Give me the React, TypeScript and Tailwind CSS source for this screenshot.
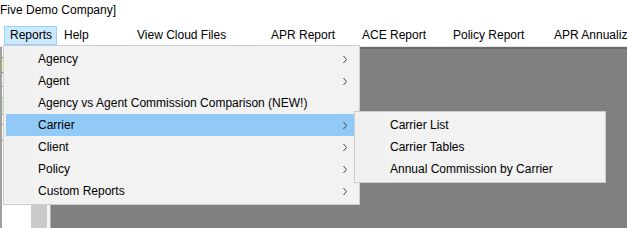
import React from "react";

const font = { fontFamily: '"Liberation Sans", Arial, sans-serif' };

function Chevron() {
  return (
    <svg width="6" height="9" viewBox="0 0 6 9" className="shrink-0">
      <path d="M1.5 1 L4.5 4.5 L1.5 8" fill="none" stroke="#404040" strokeWidth="1" />
    </svg>
  );
}

interface ItemProps {
  label: string;
  sub?: boolean;
  active?: boolean;
  gutter: string;
}

function MenuItem({ label, sub, active, gutter }: ItemProps) {
  return (
    <div className={`flex h-[22px] items-center ${active ? "bg-[#91c9f7]" : ""}`}>
      <div className={`h-full ${gutter} ${active ? "" : "bg-[#f0f0f0]"}`} />
      <span className="flex-1 pl-[5px] whitespace-nowrap">{label}</span>
      {sub && (
        <div className="w-[16px] mr-[9px] flex justify-end">
          <Chevron />
        </div>
      )}
    </div>
  );
}

const reportItems = [
  { label: "Agency", sub: true },
  { label: "Agent", sub: true },
  { label: "Agency vs Agent Commission Comparison (NEW!)" },
  { label: "Carrier", sub: true, active: true },
  { label: "Client", sub: true },
  { label: "Policy", sub: true },
  { label: "Custom Reports", sub: true },
];

const carrierItems = ["Carrier List", "Carrier Tables", "Annual Commission by Carrier"];

export default function App() {
  return (
    <div className="relative w-[627px] h-[228px] overflow-hidden bg-white text-[12px] text-black" style={font}>
      <div className="h-[24px] leading-[20px] whitespace-nowrap">Five Demo Company]</div>

      {/* menu bar */}
      <div className="flex h-[22px] items-start whitespace-nowrap overflow-hidden">
        <div className="shrink-0 ml-[4px] mt-[2px] h-[19px] w-[53px] pl-[5px] leading-[17px] bg-[#cce8ff] border border-[#99d1ff]">
          Reports
        </div>
        <div className="shrink-0 ml-[7px] w-[73px] mt-[2px] leading-[19px]">Help</div>
        <div className="shrink-0 w-[134px] mt-[2px] leading-[19px]">View Cloud Files</div>
        <div className="shrink-0 w-[91px] mt-[2px] leading-[19px]">APR Report</div>
        <div className="shrink-0 w-[91px] mt-[2px] leading-[19px]">ACE Report</div>
        <div className="shrink-0 w-[101px] mt-[2px] leading-[19px]">Policy Report</div>
        <div className="shrink-0 mt-[2px] leading-[19px]">APR Annualized Report</div>
      </div>

      {/* workspace */}
      <div className="flex h-[182px] border-t border-[#e5e5e5]">
        <div className="w-[31px] flex flex-col border-l-2 border-[#a0a0a0]">
          <div className="h-[10px]" />
          <div className="h-[16px] bg-[#ffff99] border-y border-[#707070]" />
          <div className="h-[14px] border-b border-[#a0a0a0]" />
          <div className="h-[10px]" />
          <div className="h-[18px] bg-[#c6f5c6] border-y border-[#a0a0a0]" />
          <div className="h-[10px] border-b border-[#a0a0a0]" />
          <div className="h-[16px] border-b border-[#a0a0a0]" />
          <div className="flex-1" />
        </div>
        <div className="w-[16px] bg-[#cacaca]" />
        <div className="w-[4px] bg-[#f4f4f4] border-r border-[#b0b0b0]" />
        <div className="flex-1 bg-[#808080] border-t-2 border-[#6b6b6b]" />
      </div>

      {/* Reports dropdown */}
      <div className="absolute left-[3px] top-[45px] w-[357px] h-[160px] p-[2px] bg-[#f2f2f2] border border-[#cccccc]">
        {reportItems.map(it => (
          <MenuItem key={it.label} label={it.label} sub={it.sub} active={it.active} gutter="w-[27px]" />
        ))}
      </div>

      {/* Carrier submenu */}
      <div className="absolute left-[354px] top-[111px] w-[252px] h-[72px] p-[2px] bg-[#f2f2f2] border border-[#cccccc]">
        {carrierItems.map(label => (
          <MenuItem key={label} label={label} gutter="w-[28px]" />
        ))}
      </div>
    </div>
  );
}
